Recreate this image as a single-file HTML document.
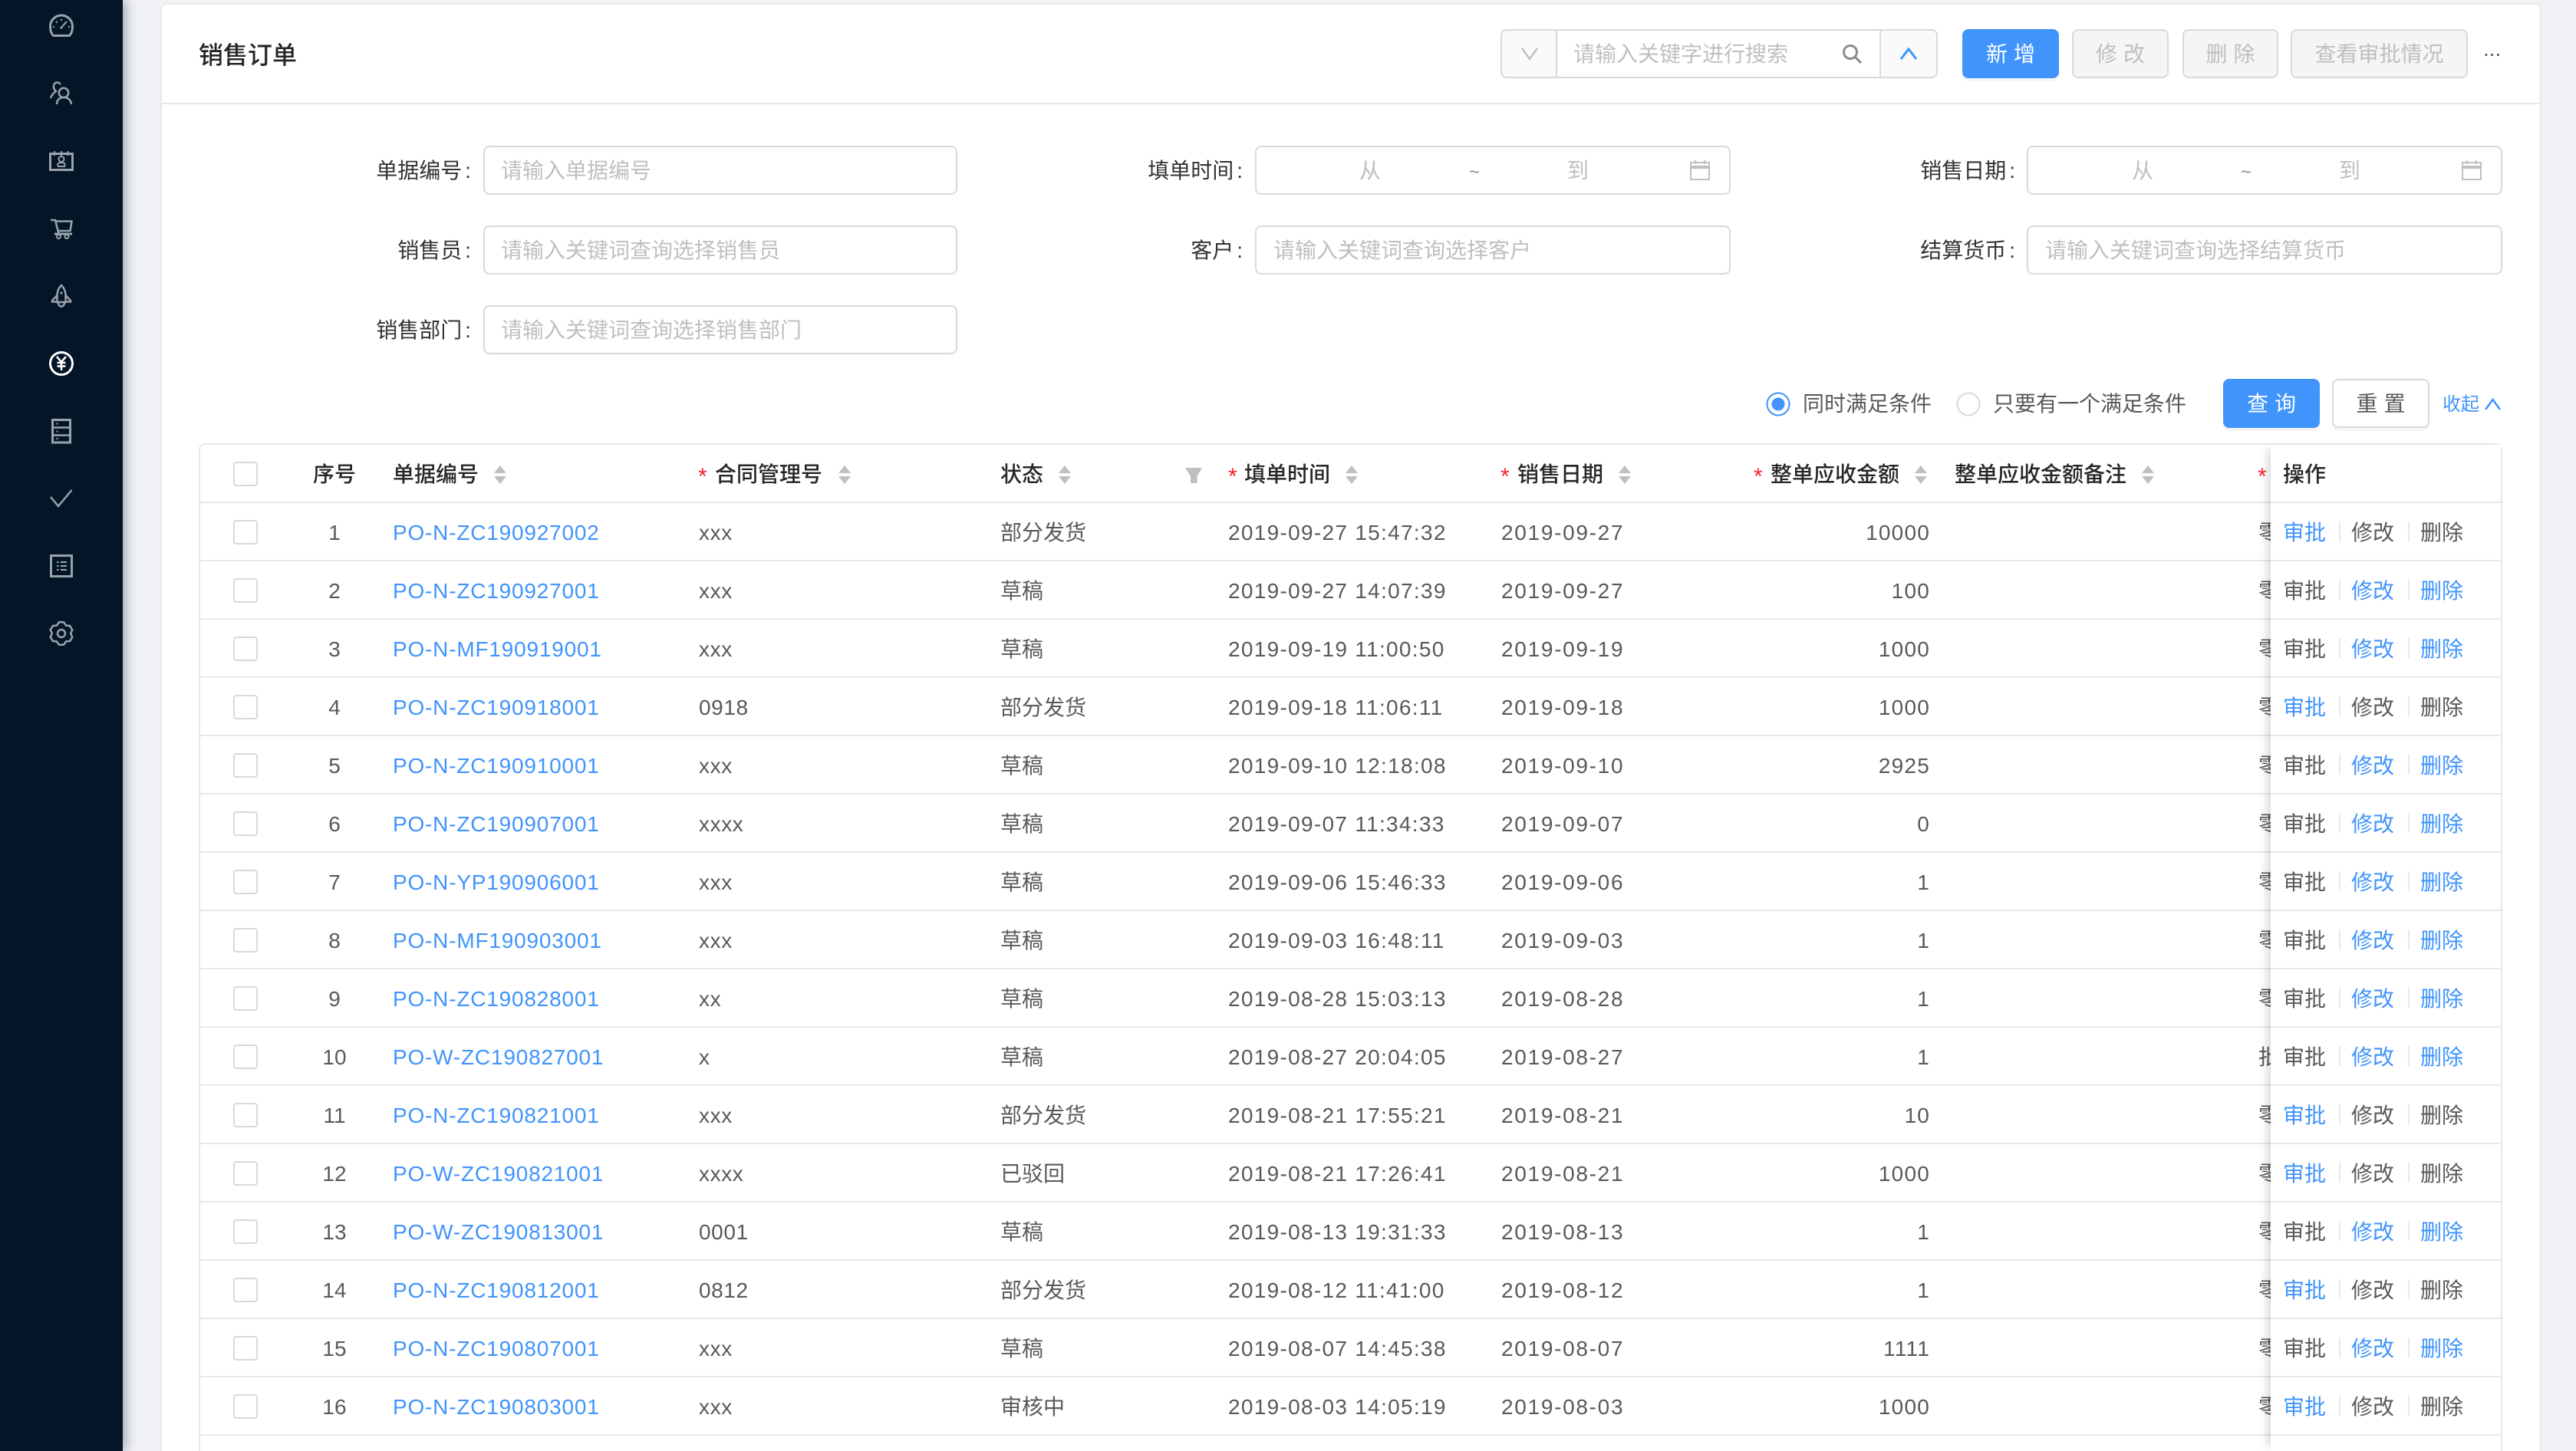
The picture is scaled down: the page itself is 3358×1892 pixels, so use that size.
<!DOCTYPE html>
<html lang="zh-CN">
<head>
<meta charset="utf-8">
<title>销售订单</title>
<style>
html,body{margin:0;padding:0;height:1892px;overflow:hidden}
body{width:3358px;position:relative;background:#f0f2f5;font-family:"Liberation Sans","Noto Sans CJK SC",sans-serif;font-size:28px;color:#595959}
div,span,svg{box-sizing:border-box}
.side{position:absolute;left:0;top:0;width:160px;height:1892px;background:#031527;box-shadow:4px 0 14px rgba(0,21,41,.35);z-index:5}
.side svg{position:absolute;left:0;top:0}
.card{position:absolute;left:209px;top:4px;width:3104px;height:1888px;background:#fff;border:2px solid #e8e8e8;border-bottom:none;border-radius:8px 8px 0 0}
.hline{position:absolute;left:211px;top:134px;width:3100px;height:2px;background:#e8e8e8}
.t{position:absolute;white-space:nowrap;line-height:40px;height:40px}
.title{left:259px;top:52px;font-size:32px;font-weight:500;color:#262626}
.box{position:absolute;border:2px solid #d9d9d9;border-radius:8px;background:#fff}
.ph{color:#bfbfbf}
.lab{text-align:right;color:#333}
.lab i{font-style:normal;margin-left:4px}
.btn{position:absolute;top:38px;height:64px;border:2px solid #d9d9d9;border-radius:8px;background:#f5f5f5;color:#bfbfbf;text-align:center;line-height:61px;white-space:nowrap}
.pri{background:#4094fb;border-color:#4094fb;color:#fff;box-shadow:0 4px 0 rgba(0,0,0,.04)}
.ls{letter-spacing:8px;text-indent:8px}
.tbl{position:absolute;left:259px;top:578px;width:3003px;height:1314px;border:2px solid #e8e8e8;border-bottom:none;border-radius:8px 8px 0 0;background:#fff}
.th{position:absolute;top:599px;height:40px;line-height:40px;white-space:nowrap;font-weight:500;color:#262626}
.star{position:absolute;top:602px;height:40px;line-height:40px;color:#f5222d;font-size:30px}
.s{position:absolute;top:607px;width:17px;height:24px}
.s:before,.s:after{content:"";position:absolute;left:0;width:0;height:0;border-left:8.5px solid transparent;border-right:8.5px solid transparent}
.s:before{top:0;border-bottom:10px solid #bfbfbf}
.s:after{bottom:0;border-top:10px solid #bfbfbf}
.cb{position:absolute;left:304px;width:32px;height:32px;border:2px solid #d9d9d9;border-radius:4px;background:#fff}
.row{position:absolute;left:0;width:3358px;height:74px;line-height:74px;white-space:nowrap;z-index:1}
.row:after{content:"";position:absolute;left:261px;top:74px;width:2999px;height:2px;background:#e8e8e8}
.row span,.act span{position:absolute;top:2px;height:74px}
.row .cb{top:22px;height:32px}
.c1{left:376px;width:120px;text-align:center}
.c2{left:512px;color:#4094fb;letter-spacing:.8px}
.c3{left:911px;letter-spacing:.6px}
.c4{left:1304px}
.c5{left:1601px;letter-spacing:1.3px}
.c6{left:1957px;letter-spacing:1.7px}
.c7{left:2216px;width:300px;text-align:right;letter-spacing:1.2px}
.c8{left:2944px}
.fix{position:absolute;left:2960px;top:580px;width:300px;height:1312px;background:#fff;box-shadow:-10px 0 12px -6px rgba(0,0,0,.16);z-index:2}
.act{position:absolute;left:2960px;width:300px;height:74px;line-height:74px;white-space:nowrap;z-index:3}
.act:after{content:"";position:absolute;left:0;top:74px;width:300px;height:2px;background:#e8e8e8}
.act .a1{left:16px}
.act .a2{left:105px}
.act .a3{left:195px}
.act .d1,.act .d2{top:24px;height:26px;width:2px;background:#e8e8e8}
.act .d1{left:89px}
.act .d2{left:179px}
.act .b{color:#4094fb}
.z3{z-index:3}
</style>
</head>
<body>
<div class="side">
<svg width="160" height="900" viewBox="0 0 160 900" fill="none" stroke="#9aa2ac" stroke-width="2.5">
<path stroke-width="3" d="M69.5 46.5C66.5 43.5 65.5 39.5 65.5 34.5A14.5 14.5 0 0 1 94.5 34.5C94.5 39.5 93.5 43.5 90.5 46.5Z"/>
<path stroke-width="2" d="M69 35h2M73 28l1.5 1.5M80 25v2M87 28l-1.5 1.5M91 35h-2M80 36l6-7"/>
<circle cx="80" cy="36" r="1.6" fill="#9aa2ac" stroke="none"/>
<circle cx="83" cy="121" r="6.2"/>
<path d="M74 136C74 130 78 127 83 127C88 127 92.500 130 93 136"/>
<path d="M79 110C75 105 69 108 70 114C70.500 117 72 118 73 119C70 121 67 124 66 128"/>
<rect x="65.500" y="200.500" width="29" height="21" stroke-width="3"/>
<path stroke-width="2" d="M71 197v6M80 197v6M88.500 197v6"/>
<circle cx="80" cy="207.500" r="3.500" stroke-width="2"/>
<path stroke-width="2" d="M75 216C75 212.500 77.500 212 80 212C82.500 212 85 212.500 85 216M75 217h10"/>
<path d="M66 287H72L76.500 305"/>
<path d="M72.500 288.500H93.500L91.500 301H75.500"/>
<path stroke-width="3" d="M71 305H94"/>
<circle cx="76.500" cy="308.500" r="2.500" stroke-width="2"/>
<circle cx="87" cy="308.500" r="2.500" stroke-width="2"/>
<path d="M80 372C76 376 74.500 380 74.500 385V394H85.500V385C85.500 380 84 376 80 372Z"/>
<path d="M74.500 385L68 392V393.500H74.500M85.500 385L92 392V393.500H85.500"/>
<path d="M75.500 394C76.500 401.500 83.500 401.500 84.500 394"/>
<circle cx="80" cy="382" r="1.600" fill="#9aa2ac" stroke="none"/>
<circle cx="80" cy="474" r="14.500" stroke="#fff" stroke-width="3"/>
<path stroke="#fff" stroke-width="2.500" d="M74 465L80 472L86 465M80 472V483M74.500 473H85.500M74.500 477.500H85.500"/>
<rect x="68.500" y="547.500" width="23" height="29.500" stroke-width="3"/>
<path d="M68.500 557.500H91.500M68.500 567.500H91.500"/>
<path stroke-width="2" d="M73.500 552.500h2M73.500 562.500h2M73.500 572h2"/>
<path d="M66 648L76 660L93.500 639"/>
<rect x="66.500" y="724.500" width="27" height="27" stroke-width="3"/>
<path stroke-width="2" d="M74 733h2.500M74 738h2.500M74 743h2.500M79 733h8M79 738h8M79 743h8"/>
<path stroke-linejoin="round" d="M76.900 811.300L83.100 811.300L86 815.600L91.100 816L94.300 821.400L92 826L94.300 830.600L91.100 836L86 836.400L83.100 840.700L76.900 840.700L74 836.400L68.900 836L65.700 830.600L68 826L65.700 821.400L68.900 816L74 815.600Z"/>
<circle cx="80" cy="826" r="5"/>
</svg>
</div>

<div class="card"></div>
<div class="hline"></div>
<div class="t title">销售订单</div>

<!-- search group -->
<div class="box" style="left:1956px;top:38px;width:570px;height:64px;background:#fff"></div>
<div class="box" style="left:1956px;top:38px;width:74px;height:64px;background:#fafafa;border-radius:8px 0 0 8px"></div>
<div class="box" style="left:2450px;top:38px;width:76px;height:64px;background:#fafafa;border-radius:0 8px 8px 0"></div>
<svg style="position:absolute;left:1980px;top:60px" width="28" height="20" fill="none"><path d="M4 3L14 17L24 3" stroke="#bfbfbf" stroke-width="2.500"/></svg>
<div class="t ph" style="left:2051px;top:51px">请输入关键字进行搜索</div>
<svg style="position:absolute;left:2398px;top:54px" width="32" height="32" fill="none" stroke="#8c8c8c" stroke-width="3"><circle cx="14" cy="14" r="8.500"/><path d="M20 20L28 28"/></svg>
<svg style="position:absolute;left:2474px;top:60px" width="28" height="20" fill="none"><path d="M4 17L14 4L24 17" stroke="#4094fb" stroke-width="3"/></svg>

<div class="btn pri ls" style="left:2558px;width:126px">新增</div>
<div class="btn ls" style="left:2701px;width:126px">修改</div>
<div class="btn ls" style="left:2845px;width:125px">删除</div>
<div class="btn" style="left:2986px;width:231px">查看审批情况</div>
<div class="t" style="left:3237px;top:44px;color:#595959">...</div>

<!-- filter form -->
<div class="t lab" style="left:414px;width:200px;top:203px">单据编号<i>:</i></div>
<div class="box" style="left:630px;top:190px;width:618px;height:64px"></div>
<div class="t ph" style="left:653px;top:203px">请输入单据编号</div>

<div class="t lab" style="left:1420px;width:200px;top:203px">填单时间<i>:</i></div>
<div class="box" style="left:1636px;top:190px;width:620px;height:64px"></div>
<div class="t ph" style="left:1772px;top:203px">从</div>
<div class="t" style="left:1915px;top:205px;font-size:24px;color:#8c8c8c">~</div>
<div class="t ph" style="left:2043px;top:203px">到</div>
<svg style="position:absolute;left:2201px;top:208px" width="30" height="28" fill="none" stroke="#bfbfbf" stroke-width="2"><rect x="3" y="4" width="24" height="22"/><path d="M3 10H27" stroke-width="4"/><path d="M9 1V6M21 1V6"/></svg>

<div class="t lab" style="left:2427px;width:200px;top:203px">销售日期<i>:</i></div>
<div class="box" style="left:2642px;top:190px;width:620px;height:64px"></div>
<div class="t ph" style="left:2779px;top:203px">从</div>
<div class="t" style="left:2921px;top:205px;font-size:24px;color:#8c8c8c">~</div>
<div class="t ph" style="left:3049px;top:203px">到</div>
<svg style="position:absolute;left:3207px;top:208px" width="30" height="28" fill="none" stroke="#bfbfbf" stroke-width="2"><rect x="3" y="4" width="24" height="22"/><path d="M3 10H27" stroke-width="4"/><path d="M9 1V6M21 1V6"/></svg>

<div class="t lab" style="left:414px;width:200px;top:307px">销售员<i>:</i></div>
<div class="box" style="left:630px;top:294px;width:618px;height:64px"></div>
<div class="t ph" style="left:653px;top:307px">请输入关键词查询选择销售员</div>

<div class="t lab" style="left:1420px;width:200px;top:307px">客户<i>:</i></div>
<div class="box" style="left:1636px;top:294px;width:620px;height:64px"></div>
<div class="t ph" style="left:1660px;top:307px">请输入关键词查询选择客户</div>

<div class="t lab" style="left:2427px;width:200px;top:307px">结算货币<i>:</i></div>
<div class="box" style="left:2642px;top:294px;width:620px;height:64px"></div>
<div class="t ph" style="left:2666px;top:307px">请输入关键词查询选择结算货币</div>

<div class="t lab" style="left:414px;width:200px;top:411px">销售部门<i>:</i></div>
<div class="box" style="left:630px;top:398px;width:618px;height:64px"></div>
<div class="t ph" style="left:653px;top:411px">请输入关键词查询选择销售部门</div>

<!-- radios + buttons -->
<svg style="position:absolute;left:2302px;top:511px" width="32" height="32"><circle cx="16" cy="16" r="14.500" fill="#fff" stroke="#4094fb" stroke-width="2"/><circle cx="16" cy="16" r="8.500" fill="#4094fb"/></svg>
<div class="t" style="left:2350px;top:507px">同时满足条件</div>
<svg style="position:absolute;left:2550px;top:511px" width="32" height="32"><circle cx="16" cy="16" r="14.500" fill="#fff" stroke="#d9d9d9" stroke-width="2"/></svg>
<div class="t" style="left:2598px;top:507px">只要有一个满足条件</div>
<div class="btn pri ls" style="left:2898px;top:494px;width:126px">查询</div>
<div class="btn ls" style="left:3040px;top:494px;width:127px;background:#fff;color:#595959;box-shadow:0 4px 0 rgba(0,0,0,.03)">重置</div>
<div class="t" style="left:3184px;top:508px;font-size:24px;color:#4094fb">收起</div>
<svg style="position:absolute;left:3236px;top:516px" width="28" height="22" fill="none"><path d="M4 18L13.500 5L23 18" stroke="#4094fb" stroke-width="2.500"/></svg>

<!-- table -->
<div class="tbl"></div>
<div style="position:absolute;left:261px;top:654px;width:2999px;height:2px;background:#e8e8e8;z-index:1"></div>
<div class="cb" style="top:602px"></div>
<div class="th" style="left:408px">序号</div>
<div class="th" style="left:512px">单据编号</div>
<div class="s" style="left:644px"></div>
<div class="star" style="left:910px">*</div>
<div class="th" style="left:932px">合同管理号</div>
<div class="s" style="left:1093px"></div>
<div class="th" style="left:1304px">状态</div>
<div class="s" style="left:1380px"></div>
<svg style="position:absolute;left:1545px;top:610px" width="22" height="20"><path d="M0 0H22L15.500 11V20H7V11Z" fill="#bfbfbf"/></svg>
<div class="star" style="left:1601px">*</div>
<div class="th" style="left:1622px">填单时间</div>
<div class="s" style="left:1754px"></div>
<div class="star" style="left:1956px">*</div>
<div class="th" style="left:1978px">销售日期</div>
<div class="s" style="left:2110px"></div>
<div class="star" style="left:2286px">*</div>
<div class="th" style="left:2308px">整单应收金额</div>
<div class="s" style="left:2496px"></div>
<div class="th" style="left:2548px">整单应收金额备注</div>
<div class="s" style="left:2792px"></div>
<div class="star" style="left:2943px">*</div>

<div class="row" style="top:656px"><span class="cb"></span><span class="c1">1</span><span class="c2">PO-N-ZC190927002</span><span class="c3">xxx</span><span class="c4">部分发货</span><span class="c5">2019-09-27 15:47:32</span><span class="c6">2019-09-27</span><span class="c7">10000</span><span class="c8">零</span></div>
<div class="row" style="top:732px"><span class="cb"></span><span class="c1">2</span><span class="c2">PO-N-ZC190927001</span><span class="c3">xxx</span><span class="c4">草稿</span><span class="c5">2019-09-27 14:07:39</span><span class="c6">2019-09-27</span><span class="c7">100</span><span class="c8">零</span></div>
<div class="row" style="top:808px"><span class="cb"></span><span class="c1">3</span><span class="c2">PO-N-MF190919001</span><span class="c3">xxx</span><span class="c4">草稿</span><span class="c5">2019-09-19 11:00:50</span><span class="c6">2019-09-19</span><span class="c7">1000</span><span class="c8">零</span></div>
<div class="row" style="top:884px"><span class="cb"></span><span class="c1">4</span><span class="c2">PO-N-ZC190918001</span><span class="c3">0918</span><span class="c4">部分发货</span><span class="c5">2019-09-18 11:06:11</span><span class="c6">2019-09-18</span><span class="c7">1000</span><span class="c8">零</span></div>
<div class="row" style="top:960px"><span class="cb"></span><span class="c1">5</span><span class="c2">PO-N-ZC190910001</span><span class="c3">xxx</span><span class="c4">草稿</span><span class="c5">2019-09-10 12:18:08</span><span class="c6">2019-09-10</span><span class="c7">2925</span><span class="c8">零</span></div>
<div class="row" style="top:1036px"><span class="cb"></span><span class="c1">6</span><span class="c2">PO-N-ZC190907001</span><span class="c3">xxxx</span><span class="c4">草稿</span><span class="c5">2019-09-07 11:34:33</span><span class="c6">2019-09-07</span><span class="c7">0</span><span class="c8">零</span></div>
<div class="row" style="top:1112px"><span class="cb"></span><span class="c1">7</span><span class="c2">PO-N-YP190906001</span><span class="c3">xxx</span><span class="c4">草稿</span><span class="c5">2019-09-06 15:46:33</span><span class="c6">2019-09-06</span><span class="c7">1</span><span class="c8">零</span></div>
<div class="row" style="top:1188px"><span class="cb"></span><span class="c1">8</span><span class="c2">PO-N-MF190903001</span><span class="c3">xxx</span><span class="c4">草稿</span><span class="c5">2019-09-03 16:48:11</span><span class="c6">2019-09-03</span><span class="c7">1</span><span class="c8">零</span></div>
<div class="row" style="top:1264px"><span class="cb"></span><span class="c1">9</span><span class="c2">PO-N-ZC190828001</span><span class="c3">xx</span><span class="c4">草稿</span><span class="c5">2019-08-28 15:03:13</span><span class="c6">2019-08-28</span><span class="c7">1</span><span class="c8">零</span></div>
<div class="row" style="top:1340px"><span class="cb"></span><span class="c1">10</span><span class="c2">PO-W-ZC190827001</span><span class="c3">x</span><span class="c4">草稿</span><span class="c5">2019-08-27 20:04:05</span><span class="c6">2019-08-27</span><span class="c7">1</span><span class="c8">批</span></div>
<div class="row" style="top:1416px"><span class="cb"></span><span class="c1">11</span><span class="c2">PO-N-ZC190821001</span><span class="c3">xxx</span><span class="c4">部分发货</span><span class="c5">2019-08-21 17:55:21</span><span class="c6">2019-08-21</span><span class="c7">10</span><span class="c8">零</span></div>
<div class="row" style="top:1492px"><span class="cb"></span><span class="c1">12</span><span class="c2">PO-W-ZC190821001</span><span class="c3">xxxx</span><span class="c4">已驳回</span><span class="c5">2019-08-21 17:26:41</span><span class="c6">2019-08-21</span><span class="c7">1000</span><span class="c8">零</span></div>
<div class="row" style="top:1568px"><span class="cb"></span><span class="c1">13</span><span class="c2">PO-W-ZC190813001</span><span class="c3">0001</span><span class="c4">草稿</span><span class="c5">2019-08-13 19:31:33</span><span class="c6">2019-08-13</span><span class="c7">1</span><span class="c8">零</span></div>
<div class="row" style="top:1644px"><span class="cb"></span><span class="c1">14</span><span class="c2">PO-N-ZC190812001</span><span class="c3">0812</span><span class="c4">部分发货</span><span class="c5">2019-08-12 11:41:00</span><span class="c6">2019-08-12</span><span class="c7">1</span><span class="c8">零</span></div>
<div class="row" style="top:1720px"><span class="cb"></span><span class="c1">15</span><span class="c2">PO-N-ZC190807001</span><span class="c3">xxx</span><span class="c4">草稿</span><span class="c5">2019-08-07 14:45:38</span><span class="c6">2019-08-07</span><span class="c7">1111</span><span class="c8">零</span></div>
<div class="row" style="top:1796px"><span class="cb"></span><span class="c1">16</span><span class="c2">PO-N-ZC190803001</span><span class="c3">xxx</span><span class="c4">审核中</span><span class="c5">2019-08-03 14:05:19</span><span class="c6">2019-08-03</span><span class="c7">1000</span><span class="c8">零</span></div>

<div class="fix"></div>
<div class="th z3" style="left:2976px">操作</div>
<div class="z3" style="position:absolute;left:2960px;top:654px;width:300px;height:2px;background:#e8e8e8"></div>

<div class="act" style="top:656px"><span class="a1 b">审批</span><span class="d1"></span><span class="a2">修改</span><span class="d2"></span><span class="a3">删除</span></div>
<div class="act" style="top:732px"><span class="a1">审批</span><span class="d1"></span><span class="a2 b">修改</span><span class="d2"></span><span class="a3 b">删除</span></div>
<div class="act" style="top:808px"><span class="a1">审批</span><span class="d1"></span><span class="a2 b">修改</span><span class="d2"></span><span class="a3 b">删除</span></div>
<div class="act" style="top:884px"><span class="a1 b">审批</span><span class="d1"></span><span class="a2">修改</span><span class="d2"></span><span class="a3">删除</span></div>
<div class="act" style="top:960px"><span class="a1">审批</span><span class="d1"></span><span class="a2 b">修改</span><span class="d2"></span><span class="a3 b">删除</span></div>
<div class="act" style="top:1036px"><span class="a1">审批</span><span class="d1"></span><span class="a2 b">修改</span><span class="d2"></span><span class="a3 b">删除</span></div>
<div class="act" style="top:1112px"><span class="a1">审批</span><span class="d1"></span><span class="a2 b">修改</span><span class="d2"></span><span class="a3 b">删除</span></div>
<div class="act" style="top:1188px"><span class="a1">审批</span><span class="d1"></span><span class="a2 b">修改</span><span class="d2"></span><span class="a3 b">删除</span></div>
<div class="act" style="top:1264px"><span class="a1">审批</span><span class="d1"></span><span class="a2 b">修改</span><span class="d2"></span><span class="a3 b">删除</span></div>
<div class="act" style="top:1340px"><span class="a1">审批</span><span class="d1"></span><span class="a2 b">修改</span><span class="d2"></span><span class="a3 b">删除</span></div>
<div class="act" style="top:1416px"><span class="a1 b">审批</span><span class="d1"></span><span class="a2">修改</span><span class="d2"></span><span class="a3">删除</span></div>
<div class="act" style="top:1492px"><span class="a1 b">审批</span><span class="d1"></span><span class="a2">修改</span><span class="d2"></span><span class="a3">删除</span></div>
<div class="act" style="top:1568px"><span class="a1">审批</span><span class="d1"></span><span class="a2 b">修改</span><span class="d2"></span><span class="a3 b">删除</span></div>
<div class="act" style="top:1644px"><span class="a1 b">审批</span><span class="d1"></span><span class="a2">修改</span><span class="d2"></span><span class="a3">删除</span></div>
<div class="act" style="top:1720px"><span class="a1">审批</span><span class="d1"></span><span class="a2 b">修改</span><span class="d2"></span><span class="a3 b">删除</span></div>
<div class="act" style="top:1796px"><span class="a1 b">审批</span><span class="d1"></span><span class="a2">修改</span><span class="d2"></span><span class="a3">删除</span></div>
</body>
</html>
